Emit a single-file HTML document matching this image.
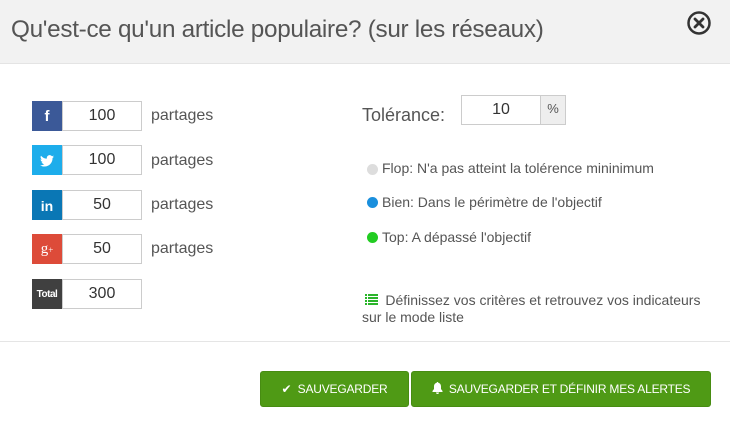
<!DOCTYPE html>
<html><head><meta charset="utf-8"><style>
*{box-sizing:border-box;margin:0;padding:0}
body{width:730px;height:434px;background:#fff;font-family:"Liberation Sans",sans-serif;color:#444;position:relative;overflow:hidden}
.hdr{position:absolute;left:0;top:0;width:730px;height:64px;background:#f2f2f2;border-bottom:1px solid #e4e4e4}
.hdr h1{position:absolute;left:11px;top:16px;font-size:24.3px;font-weight:normal;color:#555;letter-spacing:-0.3px}
.close{position:absolute;left:686px;top:10px}
.ab{position:absolute}
.ic{position:absolute;width:30px;height:30px;color:#fff;font-weight:bold;text-align:center}
.inp{position:absolute;width:80px;height:30px;border:1px solid #ccc;font-size:16px;text-align:center;line-height:28px;color:#333}
.lbl{position:absolute;font-size:16px;color:#555}
.dot{position:absolute;width:11px;height:11px;border-radius:50%}
.leg{position:absolute;font-size:14px;color:#555}
.btn{position:absolute;top:371px;height:36px;background:#4f9a15;border:1px solid #478c12;border-radius:3px;color:#fff;font-size:12px;line-height:34px;text-align:center;letter-spacing:-0.2px}
.line{position:absolute;left:0;top:341px;width:730px;height:1px;background:#e5e5e5}
</style></head><body>
<div class="hdr"><h1>Qu'est-ce qu'un article populaire? (sur les réseaux)</h1>
<svg class="close" width="26" height="26" viewBox="0 0 26 26"><circle cx="13" cy="13" r="10.5" fill="none" stroke="#333" stroke-width="2.5"/><path d="M9 9L17 17M17 9L9 17" stroke="#333" stroke-width="2.8" stroke-linecap="round"/></svg></div>

<div class="ic" style="left:32px;top:101px;background:#3b5998;font-size:15px;line-height:32px;font-family:'Liberation Sans'">f</div>
<div class="inp" style="left:62px;top:101px">100</div><div class="lbl" style="left:151px;top:107px">partages</div>

<div class="ic" style="left:32px;top:145px;background:#1dadeb"><svg width="14" height="12" viewBox="0 0 24 20" style="margin-top:10px"><path fill="#fff" d="M24 2.4c-.9.4-1.8.6-2.8.8 1-.6 1.8-1.6 2.200-2.7-1 .6-2 1-3.1 1.2C19.3.6 18 0 16.6 0c-2.7 0-4.9 2.2-4.9 4.9 0 .4 0 .8.1 1.1C7.7 5.8 4.1 3.9 1.7.9c-.4.7-.7 1.6-.7 2.5 0 1.7.9 3.2 2.2 4.1-.8 0-1.6-.2-2.2-.6v.1c0 2.4 1.7 4.4 3.9 4.8-.4.1-.8.2-1.3.2-.3 0-.6 0-.9-.1.6 2 2.4 3.4 4.6 3.4-1.7 1.3-3.8 2.1-6.1 2.1-.4 0-.8 0-1.200-.1 2.200 1.4 4.8 2.2 7.5 2.2 9.1 0 14-7.5 14-14v-.6c1-.7 1.8-1.6 2.5-2.5z"/></svg></div>
<div class="inp" style="left:62px;top:145px">100</div><div class="lbl" style="left:151px;top:152px">partages</div>

<div class="ic" style="left:32px;top:190px;background:#0a77b5;font-size:14px;line-height:32px">in</div>
<div class="inp" style="left:62px;top:190px">50</div><div class="lbl" style="left:151px;top:196px">partages</div>

<div class="ic" style="left:32px;top:234px;background:#dd4b39;font-size:15px;line-height:30px;font-family:'Liberation Serif';font-weight:normal">g<span style="font-size:9px">+</span></div>
<div class="inp" style="left:62px;top:234px">50</div><div class="lbl" style="left:151px;top:240px">partages</div>

<div class="ic" style="left:32px;top:279px;background:#404040;font-size:10px;line-height:32px;letter-spacing:-0.5px">Total</div>
<div class="inp" style="left:62px;top:279px">300</div>

<div class="lbl" style="left:362px;top:105px;font-size:18px">Tolérance:</div>
<div class="inp" style="left:461px;top:95px;width:80px;height:30px;line-height:28px">10</div>
<div class="ab" style="left:540px;top:95px;width:26px;height:30px;background:#eee;border:1px solid #ccc;font-size:13px;text-align:center;line-height:26px;color:#555">%</div>

<div class="dot" style="left:367px;top:164px;background:#ddd"></div><div class="leg" style="left:382px;top:160px">Flop: N'a pas atteint la tolérence mininimum</div>
<div class="dot" style="left:367px;top:197px;background:#1a8fdd"></div><div class="leg" style="left:382px;top:194px">Bien: Dans le périmètre de l'objectif</div>
<div class="dot" style="left:367px;top:232px;background:#22cc22"></div><div class="leg" style="left:382px;top:229px">Top: A dépassé l'objectif</div>

<svg class="ab" style="left:365px;top:294px" width="13" height="11" viewBox="0 0 13 11"><g fill="#2ab52a"><rect x="0" y="0" width="2" height="2"/><rect x="3" y="0" width="10" height="2"/><rect x="0" y="3" width="2" height="2"/><rect x="3" y="3" width="10" height="2"/><rect x="0" y="6" width="2" height="2"/><rect x="3" y="6" width="10" height="2"/><rect x="0" y="9" width="2" height="2"/><rect x="3" y="9" width="10" height="2"/></g></svg>
<div class="leg" style="left:362px;top:292px;line-height:17px;width:368px">&nbsp;&nbsp;&nbsp;&nbsp;&nbsp;&nbsp;Définissez vos critères et retrouvez vos indicateurs<br>sur le mode liste</div>

<div class="line"></div>
<div class="btn" style="left:260px;width:149px">✔&nbsp; SAUVEGARDER</div>
<div class="btn" style="left:411px;width:300px"><svg width="11" height="12" viewBox="0 0 11 12" style="vertical-align:-1px"><path fill="#fff" d="M5.5 0c.5 0 .8.3.8.7C8 1.1 9 2.5 9 4.5V7l1.5 2v1h-10V9L2 7V4.5C2 2.5 3 1.1 4.7.7 4.7.3 5 0 5.5 0zM4 10.5h3c0 .9-.6 1.5-1.5 1.5S4 11.4 4 10.5z"/></svg>&nbsp; SAUVEGARDER ET DÉFINIR MES ALERTES</div>
</body></html>
